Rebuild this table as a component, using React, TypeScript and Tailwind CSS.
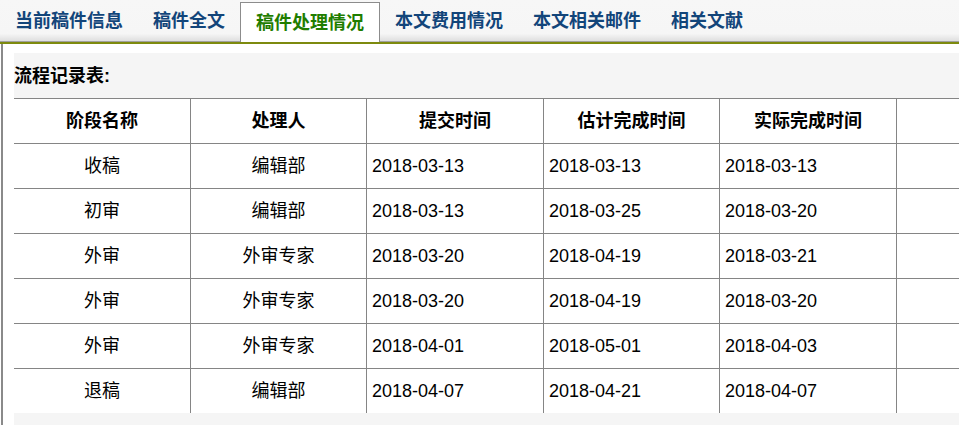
import React from "react";

const tabs = ["当前稿件信息", "稿件全文", "稿件处理情况", "本文费用情况", "本文相关邮件", "相关文献"];

const headers = ["阶段名称", "处理人", "提交时间", "估计完成时间", "实际完成时间", ""];

const rows = [
  ["收稿", "编辑部", "2018-03-13", "2018-03-13", "2018-03-13"],
  ["初审", "编辑部", "2018-03-13", "2018-03-25", "2018-03-20"],
  ["外审", "外审专家", "2018-03-20", "2018-04-19", "2018-03-21"],
  ["外审", "外审专家", "2018-03-20", "2018-04-19", "2018-03-20"],
  ["外审", "外审专家", "2018-04-01", "2018-05-01", "2018-04-03"],
  ["退稿", "编辑部", "2018-04-07", "2018-04-21", "2018-04-07"],
];

const widths = ["w-[176px]", "w-[176px]", "w-[177px]", "w-[176px]", "w-[177px]", "w-[176px]"];

export default function App() {
  return (
    <div
      className="w-[959px] h-[425px] bg-white overflow-hidden text-black"
      style={{ fontFamily: '"Liberation Sans", "Noto Sans CJK SC", sans-serif' }}
    >
      {/* Tab bar */}
      <div className="h-[42px] flex items-end bg-[linear-gradient(to_bottom,#f7f7f7_0%,#f6f6f6_80%,#dcdcdc_100%)]">
        {tabs.map((t, i) =>
          i === 2 ? (
            <div
              key={t}
              className="h-[40px] px-[15px] flex items-center bg-white border border-b-0 border-[#8c8c8c] text-[18px] leading-[20px] font-bold text-[#1f7d00]"
            >
              {t}
            </div>
          ) : (
            <div
              key={t}
              className="h-[42px] px-[15px] flex items-center text-[18px] leading-[20px] font-bold text-[#12457a] border-b border-[#a0a0a0]"
            >
              {t}
            </div>
          )
        )}
        <div className="flex-1 h-[42px] border-b border-[#a0a0a0]" />
      </div>
      <div className="h-[2px] bg-[#7d8a0e]" />

      {/* Content */}
      <div className="ml-[1px] border-l-2 border-[#8a8a8a] h-[381px] pl-[11px] pt-[9px]">
        <div className="bg-[#f5f5f5] h-full overflow-hidden">
          <div className="h-[45px] flex items-center text-[18px] font-bold leading-[20px]">流程记录表:</div>
          <div className="flex flex-col w-[1058px]">
            <div className="flex h-[45px] border-t border-[#858585] bg-white">
              {headers.map((h, i) => (
                <div
                  key={i}
                  className={`${widths[i]} shrink-0 flex items-center justify-center text-[18px] font-bold leading-[20px] ${i > 0 ? "border-l border-[#858585]" : ""}`}
                >
                  {h}
                </div>
              ))}
            </div>
            {rows.map((r, ri) => (
              <div key={ri} className="flex h-[45px] border-t border-[#858585] bg-white">
                {r.map((c, i) => (
                  <div
                    key={i}
                    className={`${widths[i]} shrink-0 flex items-center text-[18px] leading-[20px] ${i < 2 ? "justify-center" : "pl-[5px]"} ${i > 0 ? "border-l border-[#858585]" : ""}`}
                  >
                    {c}
                  </div>
                ))}
                <div className={`${widths[5]} shrink-0 border-l border-[#858585]`} />
              </div>
            ))}
          </div>
        </div>
      </div>
    </div>
  );
}
